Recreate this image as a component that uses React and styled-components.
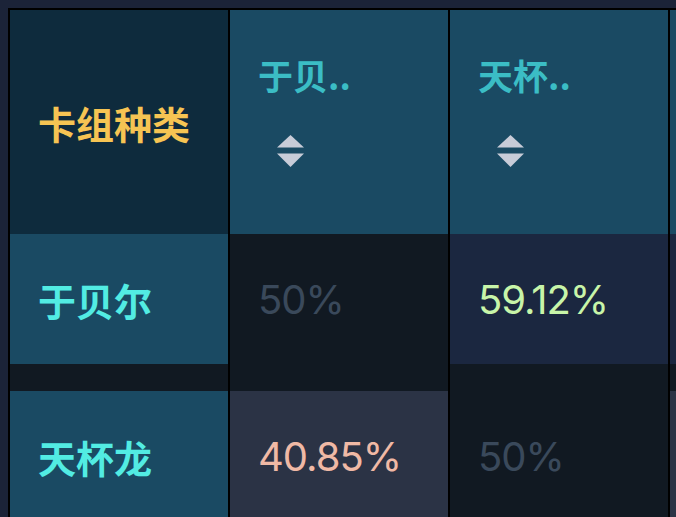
import React from "react";
import styled, { createGlobalStyle } from "styled-components";

const GlobalStyle = createGlobalStyle`
html, body {
  margin: 0;
  padding: 0;
  overflow: hidden;
  background-color: #1b2338;
}
`

const Page = styled.div`
padding: 8px 0 0 8px;
width: 676px;
height: 517px;
box-sizing: border-box;
overflow: hidden;
font-family: Inter, 'Noto Sans CJK SC', sans-serif;
`

const Board = styled.div`
display: grid;
grid-template-columns: repeat(4, 218px);
column-gap: 2px;
width: max-content;
background-color: #000;
border-left: 2px solid #000;
border-top: 2px solid #000;
`

const CornerCell = styled.div`
height: 224px;
display: flex;
align-items: center;
padding-left: 28px;
background-color: #0e2b3d;
color: #f6c453;
font-family: 'Noto Sans CJK SC', sans-serif;
font-weight: 700;
font-size: 38px;
`

const HeadCell = styled.div`
height: 224px;
box-sizing: border-box;
padding: 45px 28px 0;
background-color: #1a4a63;
`

const HeadTitle = styled.div`
color: #3bbdc5;
font-family: 'Noto Sans CJK SC', sans-serif;
font-weight: 700;
font-size: 35px;
line-height: 40px;
`

const SortIcon = styled.svg`
display: block;
margin: 40px 0 0 19px;
`

const BodyCell = styled.div`
background-color: #111922;
padding-bottom: 27px;
`

const tones = {
  label: "#1a4a63",
  even: "#111922",
  win: "#1b2740",
  loss: "#2b3345",
}

const inks = {
  even: "#3a495b",
  win: "#c8f5a9",
  loss: "#f0b9a5",
}

const Inner = styled.div`
height: 130px;
display: flex;
align-items: center;
padding-left: 28px;
background-color: ${(p) => tones[p.$tone]};
`

const Label = styled.span`
color: #52ece3;
font-family: 'Noto Sans CJK SC', sans-serif;
font-weight: 700;
font-size: 38px;
`

const Rate = styled.span`
color: ${(p) => inks[p.$tone]};
font-family: Inter, sans-serif;
font-weight: 400;
font-size: 40px;
font-variant-numeric: proportional-nums;
letter-spacing: -1px;
`

const decks = ["于贝..", "天杯..", ""]

const rows = [
  { name: "于贝尔", cells: [["50%", "even"], ["59.12%", "win"], ["", "win"]] },
  { name: "天杯龙", cells: [["40.85%", "loss"], ["50%", "even"], ["", "loss"]] },
]

function Arrows() {
  return (
    <SortIcon width="27" height="33" viewBox="0 0 27 33">
      <path d="M13.5 0 L27 12.5 L0 12.5 Z" fill="#c8ccd8" />
      <path d="M0 18.5 L27 18.5 L13.5 32 Z" fill="#c8ccd8" />
    </SortIcon>
  )
}

export default function App() {
  return (
    <Page>
      <GlobalStyle />
      <Board>
        <CornerCell>卡组种类</CornerCell>
        {decks.map((d, i) => (
          <HeadCell key={i}>
            {d && <HeadTitle>{d}</HeadTitle>}
            {d && <Arrows />}
          </HeadCell>
        ))}
        {rows.map((r) => (
          <React.Fragment key={r.name}>
            <BodyCell>
              <Inner $tone="label">
                <Label>{r.name}</Label>
              </Inner>
            </BodyCell>
            {r.cells.map(([v, t], i) => (
              <BodyCell key={i}>
                <Inner $tone={t}>
                  {v && <Rate $tone={t}>{v}</Rate>}
                </Inner>
              </BodyCell>
            ))}
          </React.Fragment>
        ))}
      </Board>
    </Page>
  )
}
